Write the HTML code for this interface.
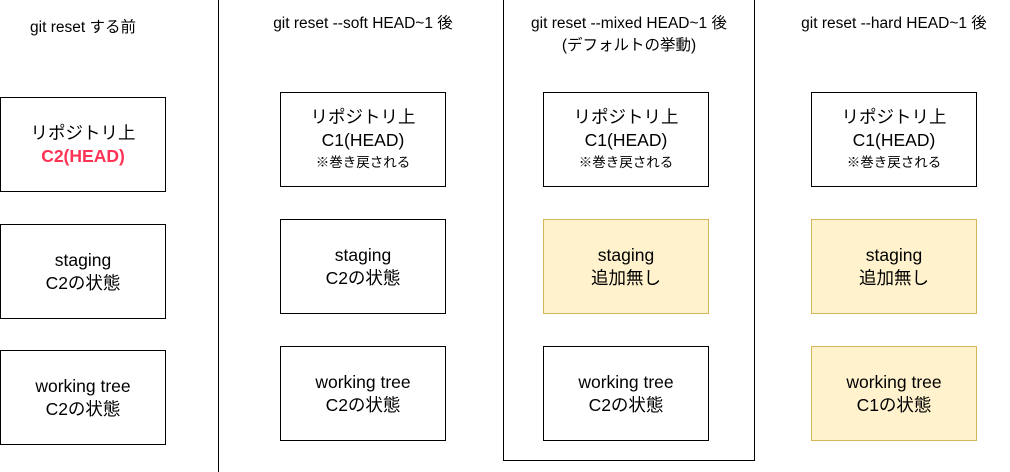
<!DOCTYPE html>
<html><head><meta charset="utf-8"><style>
body{margin:0;width:1010px;height:472px;background:#fff;position:relative;overflow:hidden;font-family:"Liberation Sans","Noto Sans CJK JP",sans-serif;color:#000}
.t{position:absolute;font-size:15.5px;text-align:center;line-height:22px}
.b{position:absolute;width:164px;height:93px;border:1px solid #000;display:flex;flex-direction:column;justify-content:center;align-items:center;font-size:17.5px;line-height:23px;text-align:center;box-sizing:content-box}
.y{background:#fff2cc;border-color:#d6b656}
.s{font-size:13.5px;line-height:21px}
.r{color:#ff3355;font-weight:bold}
</style></head><body>
<div style="position:absolute;left:218px;top:0;width:1px;height:472px;background:#000"></div>
<div style="position:absolute;left:503px;top:-1px;width:250px;height:460px;border:1px solid #000"></div>
<div class="t" style="left:0;width:166px;top:17px">git reset する前</div>
<div class="t" style="left:250px;width:226px;top:13px">git reset --soft HEAD~1 後</div>
<div class="t" style="left:503px;width:252px;top:13px">git reset --mixed HEAD~1 後<br>(デフォルトの挙動)</div>
<div class="t" style="left:780px;width:228px;top:13px">git reset --hard HEAD~1 後</div>

<div class="b" style="left:0;top:97px">リポジトリ上<span class="r">C2(HEAD)</span></div>
<div class="b" style="left:0;top:224px">staging<span>C2の状態</span></div>
<div class="b" style="left:0;top:350px">working tree<span>C2の状態</span></div>

<div class="b" style="left:280px;top:92px">リポジトリ上<span>C1(HEAD)</span><span class="s">※巻き戻される</span></div>
<div class="b" style="left:280px;top:219px">staging<span>C2の状態</span></div>
<div class="b" style="left:280px;top:346px">working tree<span>C2の状態</span></div>

<div class="b" style="left:543px;top:92px">リポジトリ上<span>C1(HEAD)</span><span class="s">※巻き戻される</span></div>
<div class="b y" style="left:543px;top:219px">staging<span>追加無し</span></div>
<div class="b" style="left:543px;top:346px">working tree<span>C2の状態</span></div>

<div class="b" style="left:811px;top:92px">リポジトリ上<span>C1(HEAD)</span><span class="s">※巻き戻される</span></div>
<div class="b y" style="left:811px;top:219px">staging<span>追加無し</span></div>
<div class="b y" style="left:811px;top:346px">working tree<span>C1の状態</span></div>
</body></html>
